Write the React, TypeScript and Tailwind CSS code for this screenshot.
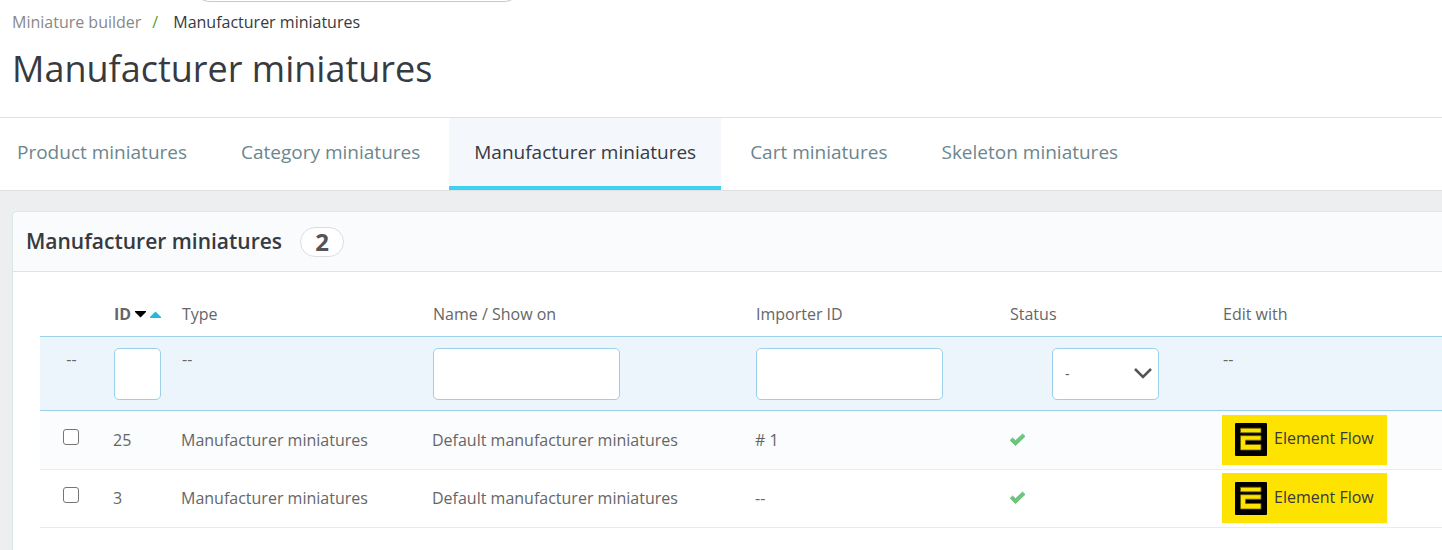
const TABS = [
  "Product miniatures",
  "Category miniatures",
  "Manufacturer miniatures",
  "Cart miniatures",
  "Skeleton miniatures",
];

const ROWS = [
  { id: 25, type: "Manufacturer miniatures", name: "Default manufacturer miniatures", importer: "# 1" },
  { id: 3, type: "Manufacturer miniatures", name: "Default manufacturer miniatures", importer: "--" },
];

const field = "h-[52px] rounded-[5px] border border-[#9ccfea] bg-white px-3 text-sm text-[#555] outline-none";

function ElementFlowLogo() {
  return (
    <svg viewBox="0 0 32 33" className="h-[33px] w-8 shrink-0" aria-hidden="true">
      <rect width="32" height="33" rx="1" fill="#000" />
      <path
        d="M5.5 5.2H26V9.8H5.5ZM5.5 12.7H26V17.2H10.5V21.5H26V27H5.5Z"
        fill="#fee300"
        stroke="#6b6000"
        strokeWidth="0.8"
      />
    </svg>
  );
}

function CheckIcon() {
  return (
    <svg viewBox="0 0 18 14" className="h-[14px] w-[18px]" role="img" aria-label="Enabled">
      <path
        d="M1.200 7.300L3.600 5L6.500 7.700L13.600 1.100L16 3.400L6.500 12.500Z"
        fill="#6cc47d"
        stroke="#6cc47d"
        strokeWidth="1"
        strokeLinejoin="round"
      />
    </svg>
  );
}

function Header() {
  return (
    <header className="bg-white">
      {/* search bar is scrolled away, only its lower edge is left */}
      <div className="flex h-[2px] items-end overflow-hidden pl-[192px]">
        <input aria-label="Search" className="h-9 w-[330px] shrink-0 rounded-full border border-[#bbcdd2]" />
      </div>
      <nav aria-label="Breadcrumb" className="flex px-3 pt-2 text-base leading-6">
        <a href="#" className="text-[#888]">Miniature builder</a>
        <span className="px-[11px] text-[#5a9e2f]">/</span>
        <span className="pl-1 text-[#363a41]">Manufacturer miniatures</span>
      </nav>
      <h1 className="px-3 pt-[11px] pb-6 text-4xl leading-[48px] text-[#363a41]">Manufacturer miniatures</h1>
    </header>
  );
}

function Tabs() {
  return (
    <nav aria-label="Miniatures" className="flex h-[74px] gap-1 border-y border-[#dfe1e4] bg-white">
      {TABS.map((tab) => (
        <a
          key={tab}
          href="#"
          aria-current={tab === "Manufacturer miniatures" ? "page" : undefined}
          className="flex items-center border-b-4 border-transparent px-[25px] text-[19px] whitespace-nowrap text-[#6c868e] first:pl-[17px] aria-[current=page]:border-[#3ed2f0] aria-[current=page]:bg-[#f4f7fc] aria-[current=page]:text-[#363a41]"
        >
          {tab}
        </a>
      ))}
    </nav>
  );
}

function MiniaturesTable() {
  return (
    <table className="w-full table-fixed border-collapse text-left text-base leading-6 text-[#666]">
      <colgroup>
        <col className="w-[63px]" />
        <col className="w-[68px]" />
        <col className="w-[251px]" />
        <col className="w-[323px]" />
        <col className="w-[254px]" />
        <col className="w-[213px]" />
        <col />
      </colgroup>
      <thead>
        <tr className="h-[34px] align-top [&>th]:pl-[11px] [&>th]:font-normal">
          <th aria-label="Select" />
          <th>
            <span className="flex items-center gap-1">
              <b>ID</b>
              <button aria-label="Sort descending">
                <svg viewBox="0 0 11 7" className="h-[7px] w-[11px]"><path d="M0 0H11V1L5.5 6.5L0 1Z" fill="#000" /></svg>
              </button>
              <button aria-label="Sort ascending">
                <svg viewBox="0 0 11 7" className="h-[7px] w-[11px]"><path d="M0 7V6L5.5 0.500L11 6V7Z" fill="#25b9d7" /></svg>
              </button>
            </span>
          </th>
          <th>Type</th>
          <th>Name / Show on</th>
          <th>Importer ID</th>
          <th>Status</th>
          <th>Edit with</th>
        </tr>
      </thead>
      <tbody>
        <tr className="h-[74px] border-y border-[#9ccfea] bg-[#edf5fc] align-top leading-[22px] [&>td]:pt-[11px] [&>td]:pl-[11px]">
          <td className="pr-[11px] text-center">--</td>
          <td><input aria-label="ID" className={`${field} block w-[47px]`} /></td>
          <td>--</td>
          <td><input aria-label="Name" className={`${field} block w-[187px]`} /></td>
          <td><input aria-label="Importer ID" className={`${field} block w-[187px]`} /></td>
          <td>
            <div className="mr-[53px] ml-auto grid w-[107px] items-center">
              <select aria-label="Status" className={`${field} col-start-1 row-start-1 w-full appearance-none`}>
                <option>-</option>
                <option>Yes</option>
                <option>No</option>
              </select>
              <svg viewBox="0 0 18 11" className="pointer-events-none col-start-1 row-start-1 mr-[7px] h-[11px] w-[18px] justify-self-end">
                <path d="M1 1L9 9L17 1" fill="none" stroke="#555" strokeWidth="2.5" />
              </svg>
            </div>
          </td>
          <td>--</td>
        </tr>
        {ROWS.map((row) => (
          <tr key={row.id} className="h-[58px] border-b border-[#ebebeb] odd:bg-white even:h-[59px] even:bg-[#fbfcfe] [&>td]:pl-[10px]">
            <td>
              <input
                type="checkbox"
                aria-label={`Select ${row.id}`}
                className="mb-[6px] ml-[13px] block size-4 appearance-none rounded-[3px] border border-[#767676] bg-white checked:bg-[#25b9d7]"
              />
            </td>
            <td>{row.id}</td>
            <td>{row.type}</td>
            <td>{row.name}</td>
            <td>{row.importer}</td>
            <td><CheckIcon /></td>
            <td>
              <a href="#" className="inline-flex h-[50px] items-center gap-[7px] bg-[#fee300] px-[13px] align-middle whitespace-nowrap text-[#363a41]">
                <ElementFlowLogo />
                <span className="pb-[3px]">Element Flow</span>
              </a>
            </td>
          </tr>
        ))}
      </tbody>
    </table>
  );
}

export default function App() {
  return (
    <div className="flex min-h-screen flex-col bg-[#edeef0] font-['Open_Sans',sans-serif]">
      <Header />
      <Tabs />
      <main className="flex flex-1 flex-col pt-5 pl-3">
        <section className="flex-1 rounded-tl-[5px] border-t border-l border-[#dbe6e9] bg-white">
          <div className="flex h-[60px] items-center gap-[18px] rounded-tl-[5px] border-b border-[#dbe6e9] bg-[#fafbfd] px-[13px]">
            <h2 className="text-[21px] font-semibold text-[#363a41]">Manufacturer miniatures</h2>
            <span className="flex h-[30px] w-11 items-center justify-center rounded-full border border-[#ddd] bg-white text-2xl font-bold text-[#555]">
              2
            </span>
          </div>
          <div className="pt-[30px] pl-[27px]">
            <MiniaturesTable />
          </div>
        </section>
      </main>
    </div>
  );
}
